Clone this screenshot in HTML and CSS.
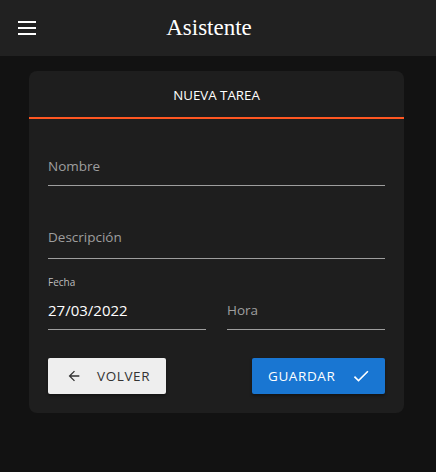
FILE: index.html
```html
<!DOCTYPE html>
<html lang="es">
<head>
<meta charset="utf-8">
<link rel="stylesheet" href="styles.css">
</head>
<body>
<header class="topbar">
  <button class="menu" aria-label="menu">
    <svg width="18" height="14" viewBox="0 0 18 14"><rect x="0" y="0" width="18" height="2" fill="#fff"/><rect x="0" y="6" width="18" height="2" fill="#fff"/><rect x="0" y="12" width="18" height="2" fill="#fff"/></svg>
  </button>
  <h1 class="title">Asistente</h1>
</header>
<main class="main">
  <section class="card">
    <div class="tabs"><div class="tab">NUEVA TAREA</div></div>
    <div class="form">
      <div class="field"><span class="placeholder">Nombre</span></div>
      <div class="field area"><span class="placeholder">Descripción</span></div>
      <div class="row">
        <div class="field filled"><span class="label">Fecha</span><span class="value">27/03/2022</span></div>
        <div class="field"><span class="placeholder">Hora</span></div>
      </div>
      <div class="actions">
        <button class="btn back">
          <svg width="16" height="16" viewBox="0 0 24 24"><path d="M20 11H7.83l5.59-5.59L12 4l-8 8 8 8 1.41-1.41L7.83 13H20v-2z" fill="#333"/></svg>
          <span>VOLVER</span>
        </button>
        <button class="btn save">
          <span>GUARDAR</span>
          <svg width="20" height="20" viewBox="0 0 24 24"><path d="M9 16.17L4.83 12l-1.42 1.41L9 19 21 7l-1.41-1.41z" fill="#fff"/></svg>
        </button>
      </div>
    </div>
  </section>
</main>
</body>
</html>
```
FILE: styles.css
```css
* { box-sizing: border-box; }
html, body { margin: 0; padding: 0; }
body {
  background: #121212;
  font-family: "Open Sans", "Noto Sans", sans-serif;
  color: #fff;
  height: 472px;
}
.topbar {
  height: 56px;
  background: #212121;
  display: flex;
  align-items: center;
  padding: 0 16px 0 18px;
  position: relative;
}
.menu {
  background: none;
  border: 0;
  padding: 0;
  width: 18px;
  height: 14px;
  display: flex;
}
.title {
  margin: 0;
  position: absolute;
  left: 0; right: 18px;
  text-align: center;
  font-family: "Liberation Serif", "Times New Roman", serif;
  font-weight: normal;
  font-size: 23px;
  top: 14px;
  line-height: 28px;
  pointer-events: none;
}
.main {
  padding: 15px 32px 0 29px;
}
.card {
  background: #1e1e1e;
  border-radius: 8px;
  width: 375px;
  height: 342px;
  overflow: hidden;
}
.tabs {
  height: 48px;
  border-bottom: 2px solid #ff5722;
  display: flex;
  align-items: center;
  justify-content: center;
}
.tab {
  font-size: 13.3px;
  color: #fff;
  padding-top: 2px;
}
.form {
  padding: 0 19px 0 19px;
}
.field {
  border-bottom: 1px solid #9e9e9e;
  height: 67px;
  display: flex;
  flex-direction: column;
  justify-content: flex-end;
  padding-bottom: 9px;
}
.field.area { height: 73px; padding-bottom: 11px; }
.placeholder {
  color: #9e9e9e;
  font-size: 13.5px;
  line-height: 20px;
}
.row {
  display: flex;
  gap: 21px;
}
.row .field { flex: 1; height: 71px; }
.filled { padding-bottom: 9px; }
.label {
  font-size: 10px;
  color: #bdbdbd;
  line-height: 14px;
  margin-bottom: 11px;
}
.value {
  font-size: 15px;
  color: #fff;
  line-height: 20px;
}
.actions {
  display: flex;
  justify-content: space-between;
  margin-top: 28px;
}
.btn {
  height: 36px;
  border: 0;
  border-radius: 2px;
  font-family: inherit;
  font-size: 13.5px;
  letter-spacing: 0.6px;
  display: flex;
  align-items: center;
  box-shadow: 0 2px 3px rgba(0,0,0,0.35);
}
.back {
  width: 118px;
  background: #eeeeee;
  color: #333;
  padding: 0 0 0 18px;
  gap: 15px;
}
.save {
  width: 133px;
  background: #1976d2;
  color: #fff;
  padding: 0 0 0 16px;
  gap: 16px;
}
```
